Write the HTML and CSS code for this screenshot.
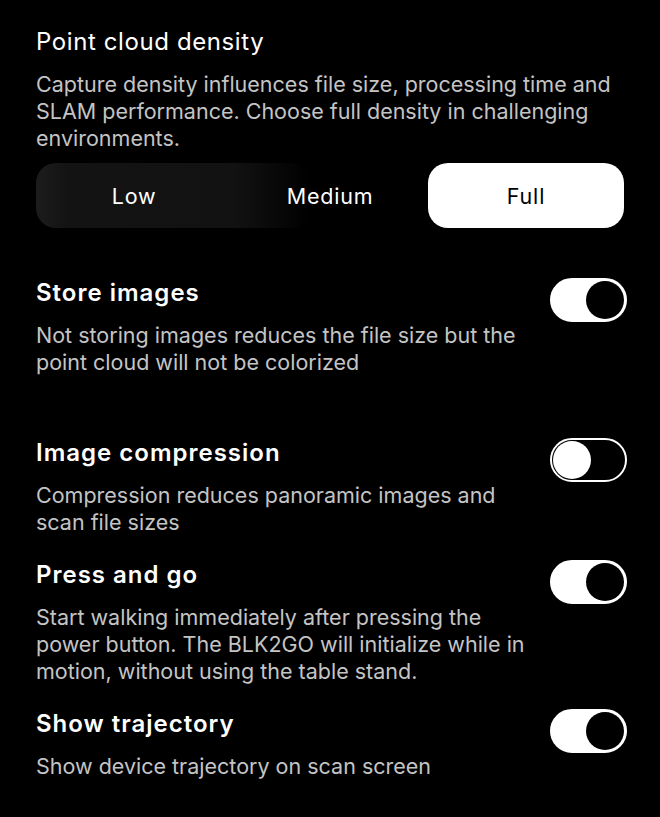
FILE: index.html
```html
<!DOCTYPE html>
<html lang="en">

<head>
    <meta charset="UTF-8">
    <meta name="viewport" content="width=device-width, initial-scale=1.0">
    <title>Scan settings</title>

    <link rel="stylesheet" href="styles.css">
</head>

<body>
    <div id="settings">
        <!-- Density picker -->
        <div class="section">
            <h2 class="title light">Point cloud density</h2>
            <p class="desc">Capture density influences file size, processing time and SLAM performance. Choose full density in challenging environments.</p>

            <div class="segmented">
                <div class="segment faded"><span>Low</span></div>
                <div class="segment"><span>Medium</span></div>
                <div class="segment selected"><span>Full</span></div>
            </div>
        </div>

        <!-- Toggle rows -->
        <div class="row first">
            <div class="text">
                <h2 class="title">Store images</h2>
                <p class="desc">Not storing images reduces the file size but the point cloud will not be colorized</p>
            </div>
            <div class="toggle on"><span class="knob"></span></div>
        </div>

        <div class="row">
            <div class="text">
                <h2 class="title">Image compression</h2>
                <p class="desc">Compression reduces panoramic images and scan file sizes</p>
            </div>
            <div class="toggle"><span class="knob"></span></div>
        </div>

        <div class="row">
            <div class="text">
                <h2 class="title">Press and go</h2>
                <p class="desc">Start walking immediately after pressing the power button. The BLK2GO will initialize while in motion, without using the table stand.</p>
            </div>
            <div class="toggle on"><span class="knob"></span></div>
        </div>

        <div class="row">
            <div class="text">
                <h2 class="title">Show trajectory</h2>
                <p class="desc">Show device trajectory on scan screen</p>
            </div>
            <div class="toggle on"><span class="knob"></span></div>
        </div>
    </div>
</body>

</html>
```

FILE: styles.css
```css
body {
  margin: 0;
  background: #000000;
  color: #ffffff;
  font-family: 'Inter', 'Noto Sans', sans-serif;
}
#settings {
  padding: 27px 33px 30px 36px;
}
/* Shared text styles */
.title {
  margin: 0;
  font-size: 24px;
  line-height: 30px;
  font-weight: 600;
  letter-spacing: 1px;
}
.title.light {
  font-weight: 400;
  letter-spacing: 0.6px;
}
.desc {
  margin: 14px 0 0 0;
  font-size: 21.5px;
  line-height: 27px;
  color: #c4c4c4;
  letter-spacing: 0;
}
/* Segmented control */
.segmented {
  display: grid;
  grid-template-columns: 1fr 1fr 1fr;
  height: 65px;
  margin: 11px 3px 0 0;
}
.segment {
  display: flex;
  align-items: center;
  justify-content: center;
  font-size: 21.5px;
  letter-spacing: 0.8px;
  color: #ffffff;
  border-radius: 20px;
  position: relative;
}
.segment span {
  position: relative;
}
/* dark highlight that fades out behind the first two options */
.segment.faded::before {
  content: "";
  position: absolute;
  left: 0;
  top: 0;
  bottom: 0;
  width: 140%;
  border-radius: 20px;
  background: linear-gradient(90deg, #1c1c1c 0%, #131313 12%, #121212 72%, rgba(18, 18, 18, 0) 100%);
}
.segment.selected {
  background: #ffffff;
  color: #000000;
}
/* Toggle rows */
.row {
  display: grid;
  grid-template-columns: 1fr auto;
  column-gap: 8px;
  align-items: start;
  margin-top: 24px;
}
.row.first {
  margin-top: 50px;
  padding-bottom: 38px;
}
.toggle {
  width: 77px;
  height: 44px;
  box-sizing: border-box;
  border: 2px solid #ffffff;
  border-radius: 22px;
  background: #000000;
  display: flex;
  align-items: center;
  padding: 0 1px;
}
.knob {
  width: 38px;
  height: 38px;
  border-radius: 50%;
  background: #ffffff;
}
.toggle.on {
  background: #ffffff;
  justify-content: flex-end;
}
.toggle.on .knob {
  background: #000000;
}
```
